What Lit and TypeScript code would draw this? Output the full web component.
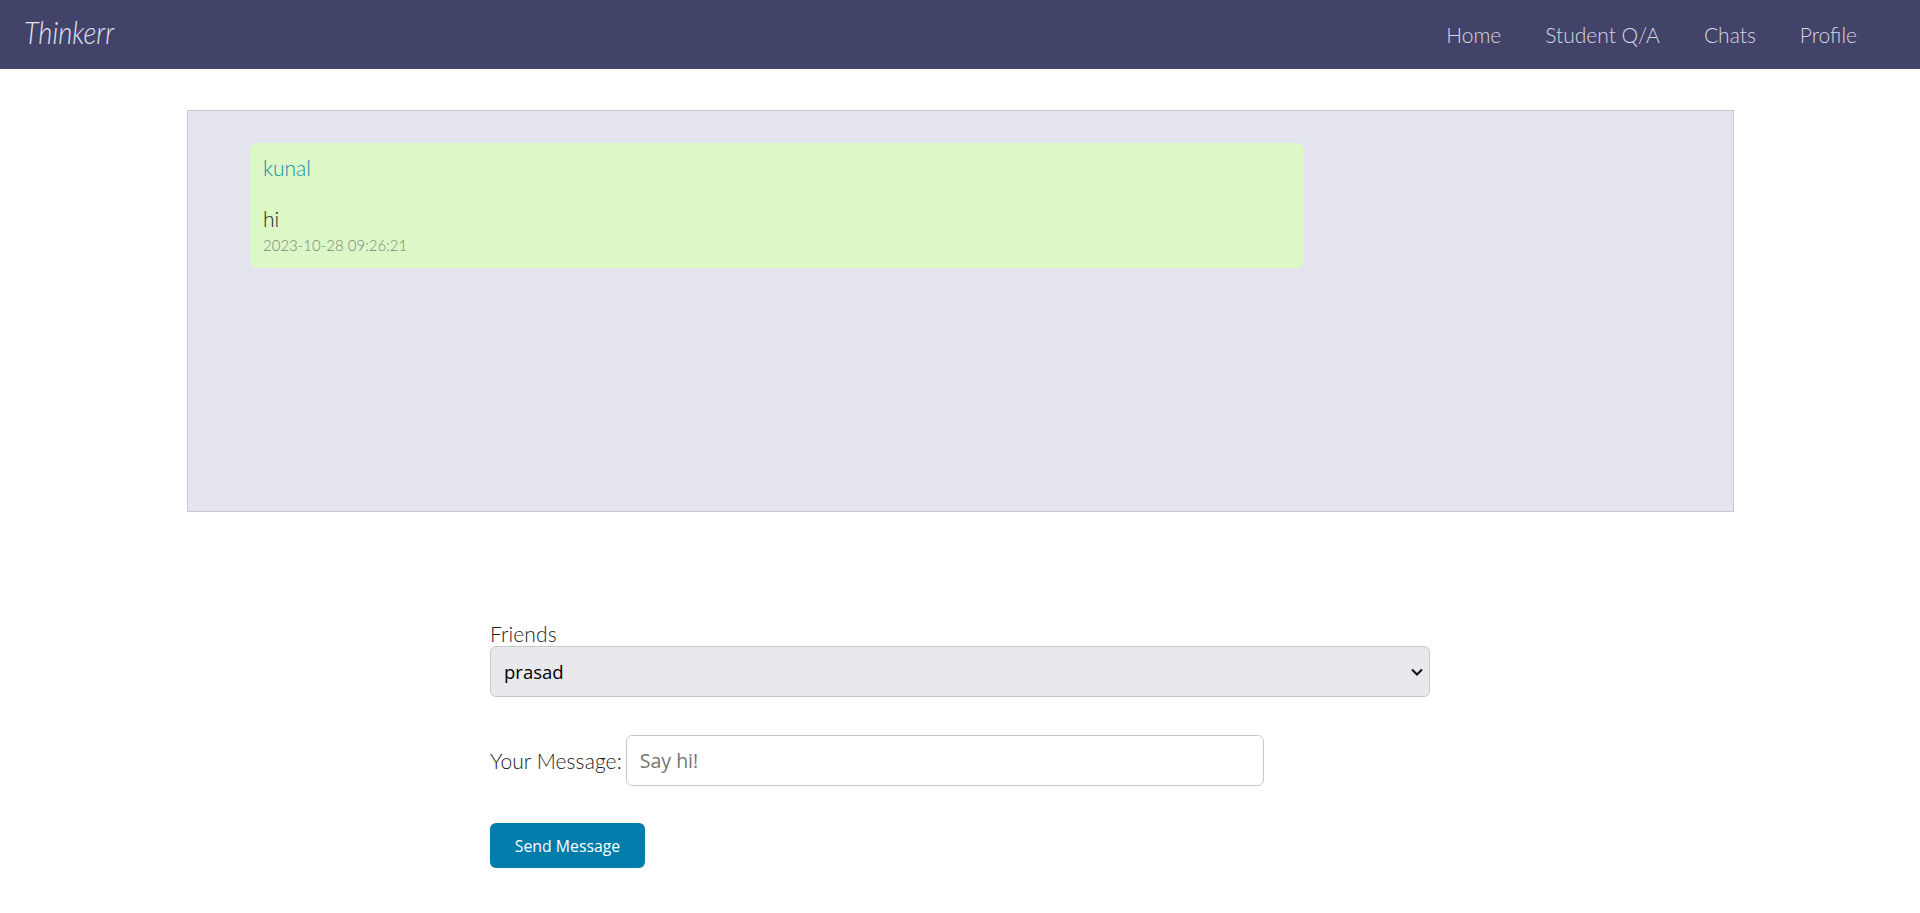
import { LitElement, html, css } from "lit";
import { customElement } from "lit/decorators.js";

@customElement("app-root")
export class AppRoot extends LitElement {
  static styles = css`
    :host { display: block; font-family: "Lato", "Liberation Sans", sans-serif; font-weight: 300; color: #212529; background: #fff; min-height: 913px; }
    * { box-sizing: border-box; }
    .nav { height: 69px; background: #424369; display: flex; align-items: center; justify-content: space-between; padding: 0 63px 0 24px; }
    .logo { font-family: "Lato", serif; font-style: italic; font-weight: 300; font-size: 31px; color: #e4e4ee; margin-top: -6px; transform: scaleX(0.88); transform-origin: left center; }
    .links { display: flex; gap: 44px; font-size: 21px; color: #d6d6e2; }
    .chat { width: 1547px; height: 402px; margin: 41px 0 0 187px; background: #e4e4ee; border: 1px solid #c8c8d0; padding: 32px 0 0 62px; }
    .bubble { width: 1054px; height: 125px; background: #dcf8c6; border-radius: 8px; padding: 12px 13px; display: flex; flex-direction: column; }
    .from { font-size: 21px; line-height: 26px; color: #0f8fb0; }
    .text { font-size: 21px; line-height: 26px; margin-top: 25px; color: #1f231f; }
    .time { font-size: 15px; line-height: 22px; margin-top: 2px; color: #7f857c; }
    .form { width: 940px; margin: 110px 0 0 490px; display: flex; flex-direction: column; }
    .label { font-size: 21px; line-height: 24px; letter-spacing: 0.1px; color: #1c1c1c; }
    .select { height: 51px; background: #e8e8ed; border: 1px solid #c8c8d0; border-radius: 6px; display: flex; align-items: center; justify-content: space-between; padding: 0 6px 0 13px; font-family: "Open Sans", sans-serif; font-weight: 500; font-size: 18.5px; color: #000; }
    .row { display: flex; align-items: center; gap: 4px; margin-top: 38px; }
    .input { width: 638px; height: 51px; border: 1px solid #c8c8d0; border-radius: 6px; display: flex; align-items: center; padding: 0 13px; font-family: "Open Sans", sans-serif; font-weight: 400; font-size: 19.5px; color: #757575; }
    .btn { width: 155px; height: 45px; margin-top: 37px; background: #007dab; color: #fff; border-radius: 6px; display: flex; align-items: center; justify-content: center; font-family: "Open Sans", sans-serif; font-weight: 400; font-size: 15.8px; }
    svg { display: block; }
  `;

  render() {
    return html`
      <div class="nav">
        <div class="logo">Thinkerr</div>
        <div class="links"><span>Home</span><span>Student Q/A</span><span>Chats</span><span>Profile</span></div>
      </div>
      <div class="chat">
        <div class="bubble">
          <div class="from">kunal</div>
          <div class="text">hi</div>
          <div class="time">2023-10-28 09:26:21</div>
        </div>
      </div>
      <div class="form">
        <div class="label">Friends</div>
        <div class="select">
          <span>prasad</span>
          <svg width="12" height="8" viewBox="0 0 12 8"><path d="M1 1.5 6 6.5 11 1.5" fill="none" stroke="#111" stroke-width="2"/></svg>
        </div>
        <div class="row">
          <span class="label">Your Message:</span>
          <div class="input">Say hi!</div>
        </div>
        <div class="btn">Send Message</div>
      </div>
    `;
  }
}
